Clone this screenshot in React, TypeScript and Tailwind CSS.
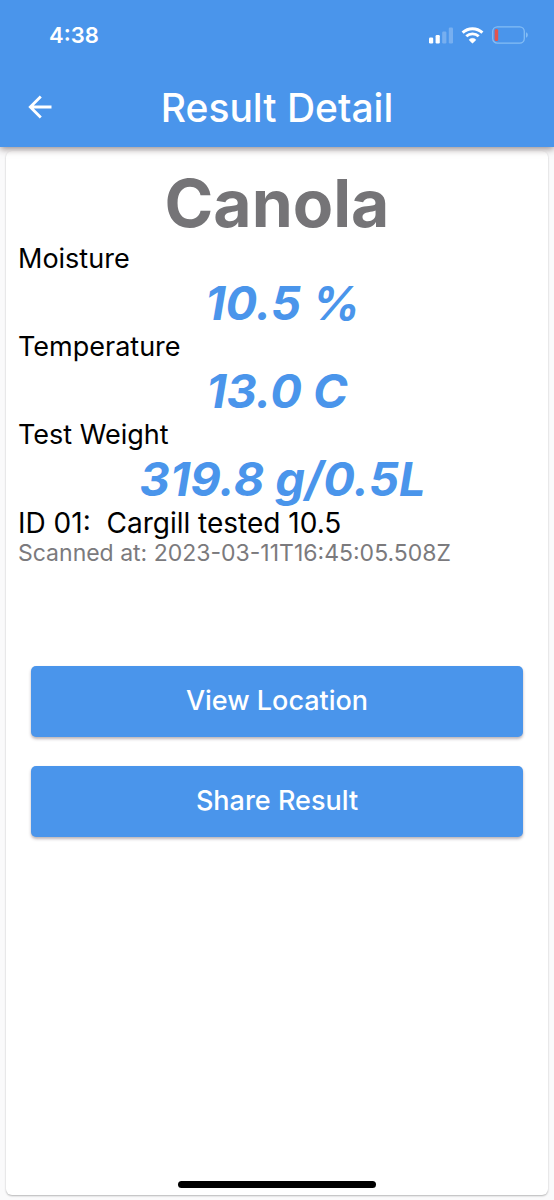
import React from "react";

type Reading = { label: string; value: string };

const readings: Reading[] = [
  { label: "Moisture", value: " 10.5 %" },
  { label: "Temperature", value: "13.0 C" },
  { label: "Test Weight", value: " 319.8 g/0.5L" },
];

function SignalIcon() {
  return (
    <svg width="24" height="17" viewBox="0 0 24 17" fill="white" aria-hidden="true">
      <rect x="0" y="10.5" width="4.2" height="6" rx="1.2" />
      <rect x="6.6" y="8" width="4.2" height="8.5" rx="1.2" />
      <rect x="13.2" y="4.5" width="4.2" height="12" rx="1.2" opacity="0.25" />
      <rect x="19.8" y="0.5" width="4.2" height="16" rx="1.2" opacity="0.25" />
    </svg>
  );
}

function WifiIcon() {
  return (
    <svg width="23" height="17" viewBox="0 0 23 17" fill="none" stroke="white" aria-hidden="true">
      <path d="M1.600 5.600C4.300 3.100 7.700 1.700 11.500 1.700s7.200 1.400 9.900 3.900" strokeWidth="3" />
      <path d="M5.300 9.300c1.700-1.600 3.800-2.400 6.200-2.400s4.500.8 6.200 2.400" strokeWidth="2.900" />
      <path d="M14.700 13.200c.2-.2.200-.5 0-.7-.9-.8-2-1.200-3.200-1.200s-2.300.4-3.200 1.200c-.2.200-.2.500 0 .7l2.800 2.900c.2.200.5.200.7 0z" fill="white" strokeWidth="0.400" />
    </svg>
  );
}

function BatteryIcon() {
  return (
    <svg width="36" height="18" viewBox="0 0 36 18" fill="none" aria-hidden="true">
      <rect x="0.7" y="0.9" width="31.600" height="16.200" rx="4.600" stroke="#84bdf5" strokeWidth="1.300" />
      <path d="M34 6.300c1.100.4 1.800 1.500 1.800 2.700s-.7 2.300-1.800 2.700z" fill="#84bdf5" />
      <rect x="2.700" y="3" width="3.500" height="12" rx="1.600" fill="#e2544f" />
    </svg>
  );
}

function BackArrow() {
  return (
    <svg width="24" height="24" viewBox="0 0 24 24" fill="none" stroke="white" strokeWidth="2.800" aria-hidden="true">
      <path d="M23.500 12H2.500M12.800 1.500L2.300 12l10.500 10.500" />
    </svg>
  );
}

function ActionButton({ children }: { children: React.ReactNode }) {
  return (
    <button
      type="button"
      className="h-[71px] w-full rounded-[5px] bg-[#4a95eb] text-[27px] font-medium text-white shadow-[0_2px_3px_rgba(60,40,50,0.35)]"
    >
      {children}
    </button>
  );
}

export default function App() {
  return (
    <div className="flex min-h-screen flex-col bg-[#fafafb] font-['Inter',sans-serif] text-black">
      <header className="relative bg-[#4a95eb] text-white shadow-[0_2px_7px_rgba(50,30,30,0.5)]">
        <div className="flex h-[70px] items-center justify-between pl-[49px] pr-[26px]">
          <time className="text-[22px] font-semibold">4:38</time>
          <div className="flex items-center gap-2">
            <SignalIcon />
            <WifiIcon />
            <BatteryIcon />
          </div>
        </div>
        <div className="grid h-[77px] grid-cols-[80px_1fr_80px] items-center pb-[3px]">
          <button type="button" aria-label="Back" className="flex h-full items-center justify-center">
            <BackArrow />
          </button>
          <h1 className="text-center text-[39px] font-medium leading-none">Result Detail</h1>
        </div>
      </header>

      <main className="mx-1.5 mb-[5px] mt-1 flex grow flex-col rounded-md bg-white px-3 pb-[7px] pt-3 shadow-[0_1px_2px_rgba(0,0,0,0.28)]">
        <h2 className="text-center text-[66px] font-bold leading-[80px] text-[#757477]">Canola</h2>
        <dl>
          {readings.map((r) => (
            <div key={r.label}>
              <dt className="text-[27px] leading-8">{r.label}</dt>
              <dd className="whitespace-pre text-center text-[47px] font-bold italic leading-[56px] text-[#4a95eb]">
                {r.value}
              </dd>
            </div>
          ))}
        </dl>
        <p className="whitespace-pre-wrap text-[28px] leading-8">{"ID 01:  Cargill tested 10.5"}</p>
        <p className="text-[23px] leading-7 text-[#7b7a7d]">Scanned at: 2023-03-11T16:45:05.508Z</p>
        <div className="mt-[99px] flex flex-col gap-[29px] px-[13px]">
          <ActionButton>View Location</ActionButton>
          <ActionButton>Share Result</ActionButton>
        </div>
        <div className="mx-auto mt-auto h-[7px] w-[198px] rounded-full bg-black" />
      </main>
    </div>
  );
}
